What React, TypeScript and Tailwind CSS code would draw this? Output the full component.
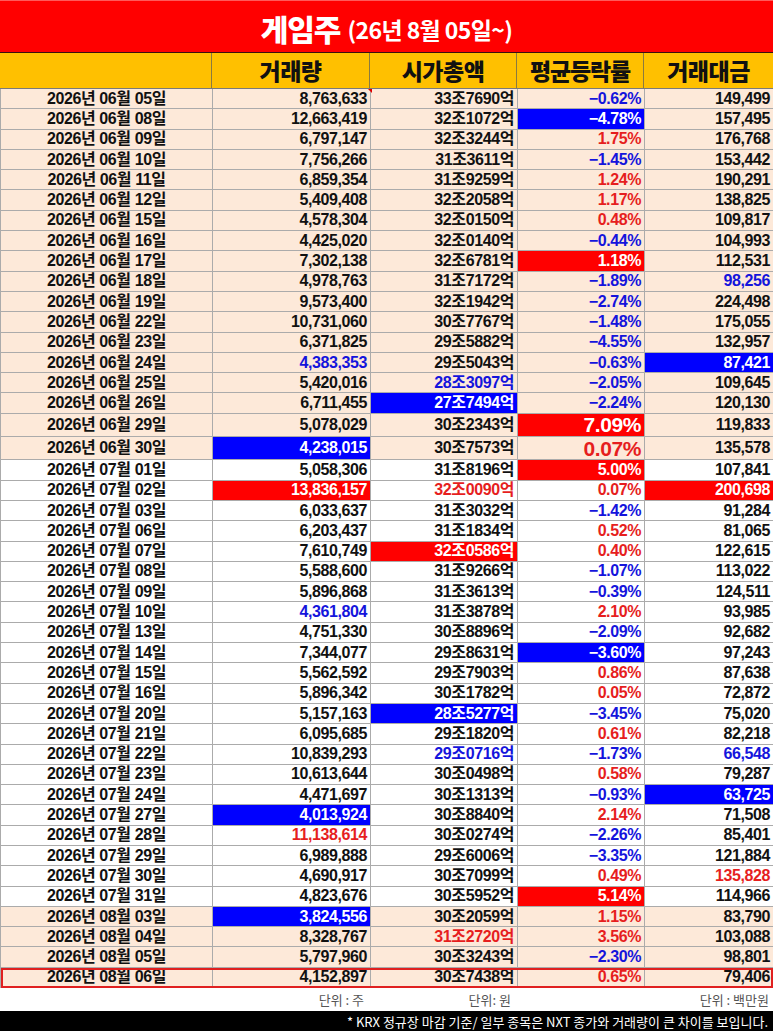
import React from 'react';

type Mark = 'bt' | 'rt' | 'bb' | 'rb';

interface Row {
  d: string;
  v: string;
  c: string;
  p: string;
  a: string;
  vm?: Mark;
  cm?: Mark;
  pm?: Mark;
  am?: Mark;
  tall?: boolean;
  big?: boolean;
  peach?: boolean;
  boxed?: boolean;
}

const ROWS: Row[] = [
  { d: '06월 05일', v: '8,763,633', c: '33조7690억', p: '-0.62%', a: '149,499', peach: true },
  { d: '06월 08일', v: '12,663,419', c: '32조1072억', p: '-4.78%', a: '157,495', pm: 'bb', peach: true },
  { d: '06월 09일', v: '6,797,147', c: '32조3244억', p: '1.75%', a: '176,768', peach: true },
  { d: '06월 10일', v: '7,756,266', c: '31조3611억', p: '-1.45%', a: '153,442', peach: true },
  { d: '06월 11일', v: '6,859,354', c: '31조9259억', p: '1.24%', a: '190,291', peach: true },
  { d: '06월 12일', v: '5,409,408', c: '32조2058억', p: '1.17%', a: '138,825', peach: true },
  { d: '06월 15일', v: '4,578,304', c: '32조0150억', p: '0.48%', a: '109,817', peach: true },
  { d: '06월 16일', v: '4,425,020', c: '32조0140억', p: '-0.44%', a: '104,993', peach: true },
  { d: '06월 17일', v: '7,302,138', c: '32조6781억', p: '1.18%', a: '112,531', pm: 'rb', peach: true },
  { d: '06월 18일', v: '4,978,763', c: '31조7172억', p: '-1.89%', a: '98,256', am: 'bt', peach: true },
  { d: '06월 19일', v: '9,573,400', c: '32조1942억', p: '-2.74%', a: '224,498', peach: true },
  { d: '06월 22일', v: '10,731,060', c: '30조7767억', p: '-1.48%', a: '175,055', peach: true },
  { d: '06월 23일', v: '6,371,825', c: '29조5882억', p: '-4.55%', a: '132,957', peach: true },
  { d: '06월 24일', v: '4,383,353', c: '29조5043억', p: '-0.63%', a: '87,421', vm: 'bt', am: 'bb', peach: true },
  { d: '06월 25일', v: '5,420,016', c: '28조3097억', p: '-2.05%', a: '109,645', cm: 'bt', peach: true },
  { d: '06월 26일', v: '6,711,455', c: '27조7494억', p: '-2.24%', a: '120,130', cm: 'bb', peach: true },
  { d: '06월 29일', v: '5,078,029', c: '30조2343억', p: '7.09%', a: '119,833', pm: 'rb', tall: true, big: true, peach: true },
  { d: '06월 30일', v: '4,238,015', c: '30조7573억', p: '0.07%', a: '135,578', vm: 'bb', tall: true, big: true, peach: true },
  { d: '07월 01일', v: '5,058,306', c: '31조8196억', p: '5.00%', a: '107,841', pm: 'rb' },
  { d: '07월 02일', v: '13,836,157', c: '32조0090억', p: '0.07%', a: '200,698', vm: 'rb', cm: 'rt', am: 'rb' },
  { d: '07월 03일', v: '6,033,637', c: '31조3032억', p: '-1.42%', a: '91,284' },
  { d: '07월 06일', v: '6,203,437', c: '31조1834억', p: '0.52%', a: '81,065' },
  { d: '07월 07일', v: '7,610,749', c: '32조0586억', p: '0.40%', a: '122,615', cm: 'rb' },
  { d: '07월 08일', v: '5,588,600', c: '31조9266억', p: '-1.07%', a: '113,022' },
  { d: '07월 09일', v: '5,896,868', c: '31조3613억', p: '-0.39%', a: '124,511' },
  { d: '07월 10일', v: '4,361,804', c: '31조3878억', p: '2.10%', a: '93,985', vm: 'bt' },
  { d: '07월 13일', v: '4,751,330', c: '30조8896억', p: '-2.09%', a: '92,682' },
  { d: '07월 14일', v: '7,344,077', c: '29조8631억', p: '-3.60%', a: '97,243', pm: 'bb' },
  { d: '07월 15일', v: '5,562,592', c: '29조7903억', p: '0.86%', a: '87,638' },
  { d: '07월 16일', v: '5,896,342', c: '30조1782억', p: '0.05%', a: '72,872' },
  { d: '07월 20일', v: '5,157,163', c: '28조5277억', p: '-3.45%', a: '75,020', cm: 'bb' },
  { d: '07월 21일', v: '6,095,685', c: '29조1820억', p: '0.61%', a: '82,218' },
  { d: '07월 22일', v: '10,839,293', c: '29조0716억', p: '-1.73%', a: '66,548', cm: 'bt', am: 'bt' },
  { d: '07월 23일', v: '10,613,644', c: '30조0498억', p: '0.58%', a: '79,287' },
  { d: '07월 24일', v: '4,471,697', c: '30조1313억', p: '-0.93%', a: '63,725', am: 'bb' },
  { d: '07월 27일', v: '4,013,924', c: '30조8840억', p: '2.14%', a: '71,508', vm: 'bb' },
  { d: '07월 28일', v: '11,138,614', c: '30조0274억', p: '-2.26%', a: '85,401', vm: 'rt' },
  { d: '07월 29일', v: '6,989,888', c: '29조6006억', p: '-3.35%', a: '121,884' },
  { d: '07월 30일', v: '4,690,917', c: '30조7099억', p: '0.49%', a: '135,828', am: 'rt' },
  { d: '07월 31일', v: '4,823,676', c: '30조5952억', p: '5.14%', a: '114,966', pm: 'rb' },
  { d: '08월 03일', v: '3,824,556', c: '30조2059억', p: '1.15%', a: '83,790', vm: 'bb', peach: true },
  { d: '08월 04일', v: '8,328,767', c: '31조2720억', p: '3.56%', a: '103,088', cm: 'rt', peach: true },
  { d: '08월 05일', v: '5,797,960', c: '30조3243억', p: '-2.30%', a: '98,801', peach: true },
  { d: '08월 06일', v: '4,152,897', c: '30조7438억', p: '0.65%', a: '79,406', peach: true, boxed: true },
];

const MARK_CLASS: Record<Mark, string> = {
  bt: 'text-[#1414dc]',
  rt: 'text-[#e61e1e]',
  bb: 'bg-[#0000ff] text-white',
  rb: 'bg-[#ff0000] text-white',
};

const COLS = 'grid grid-cols-[212px_158px_147px_127px_129px]';
const FONT = "font-['Liberation_Sans','Noto_Sans_CJK_KR',sans-serif]";

function NumCell({ value, mark, big }: { value: string; mark?: Mark; big?: boolean }) {
  return (
    <div
      className={`flex items-center justify-end border-r border-b border-[#ababab] pr-[3px] ${
        big ? 'text-[21px]' : 'text-[16px]'
      } ${mark ? MARK_CLASS[mark] : 'text-[#111]'}`}
    >
      {value}
    </div>
  );
}

function DataRow({ row, first }: { row: Row; first: boolean }) {
  const neg = row.p.startsWith('-');
  const pctMark: Mark = row.pm ?? (neg ? 'bt' : 'rt');
  const pct = neg ? '\u2212' + row.p.slice(1) : row.p;
  return (
    <div
      className={`${COLS} relative ${row.tall ? 'h-[23.3px]' : 'h-[20.3px]'} ${
        row.peach ? 'bg-[#fde9d9]' : 'bg-white'
      } ${row.boxed ? 'outline-2 -outline-offset-2 outline-[#e02020]' : ''}`}
    >
      <div className="flex items-center justify-center border-r border-b border-[#ababab] text-[16px] text-[#111]">
        2026년 {row.d}
      </div>
      <NumCell value={row.v} mark={row.vm} />
      <NumCell value={row.c} mark={row.cm} />
      <NumCell value={pct} mark={pctMark} big={row.big} />
      <NumCell value={row.a} mark={row.am} />
      {first && (
        <span className="absolute left-[367px] top-0 h-0 w-0 border-l-[4px] border-t-[4px] border-l-transparent border-t-[#e00000]" />
      )}
    </div>
  );
}

export default function App() {
  return (
    <div className={`w-[773px] bg-white ${FONT} font-bold leading-none tracking-[-0.4px]`}>
      {/* title */}
      <div className="flex h-[53px] items-center justify-center gap-[7px] border-t border-b border-t-[#ff5a5a] border-b-[#3a1010] bg-[#ff0000] pt-[2px] text-white">
        <span className="font-['Noto_Sans_CJK_KR',sans-serif] text-[30px] font-black tracking-[-1px]">게임주</span>
        <span className="mt-[4px] font-['Noto_Sans_CJK_KR',sans-serif] text-[23px] font-bold tracking-[-0.6px]">
          (26년 8월 05일~)
        </span>
      </div>

      {/* header */}
      <div
        className={`${COLS} h-[36px] border-b border-[#7a7a7a] bg-[#ffc000] font-['Noto_Sans_CJK_KR',sans-serif] text-[23px] font-black tracking-[-0.5px] text-[#111]`}
      >
        <div className="border-r border-[#8a7a40]" />
        <div className="flex items-center justify-center border-r border-[#8a7a40]">거래량</div>
        <div className="flex items-center justify-center border-r border-[#8a7a40]">시가총액</div>
        <div className="flex items-center justify-center border-r border-[#8a7a40] tracking-[-1.2px]">평균등락률</div>
        <div className="flex items-center justify-center">거래대금</div>
      </div>

      {/* rows */}
      <div className="border-l border-[#ababab]">
        {ROWS.map((r, i) => (
          <DataRow key={r.d} row={r} first={i === 0} />
        ))}
      </div>

      {/* units */}
      <div className={`${COLS} h-[23px] font-['Noto_Sans_CJK_KR',sans-serif] text-[13px] font-normal tracking-normal text-[#555]`}>
        <div />
        <div className="flex items-center justify-end pr-[6px]">단위 : 주</div>
        <div className="flex items-center justify-end pr-[6px]">단위: 원</div>
        <div />
        <div className="flex items-center justify-end pr-[4px]">단위 : 백만원</div>
      </div>

      {/* note */}
      <div className="flex h-[20px] items-center justify-end bg-black pr-[5px] font-['Noto_Sans_CJK_KR',sans-serif] text-[13px] font-normal tracking-normal text-white">
        * KRX 정규장 마감 기준/ 일부 종목은 NXT 종가와 거래량이 큰 차이를 보입니다.
      </div>
    </div>
  );
}
